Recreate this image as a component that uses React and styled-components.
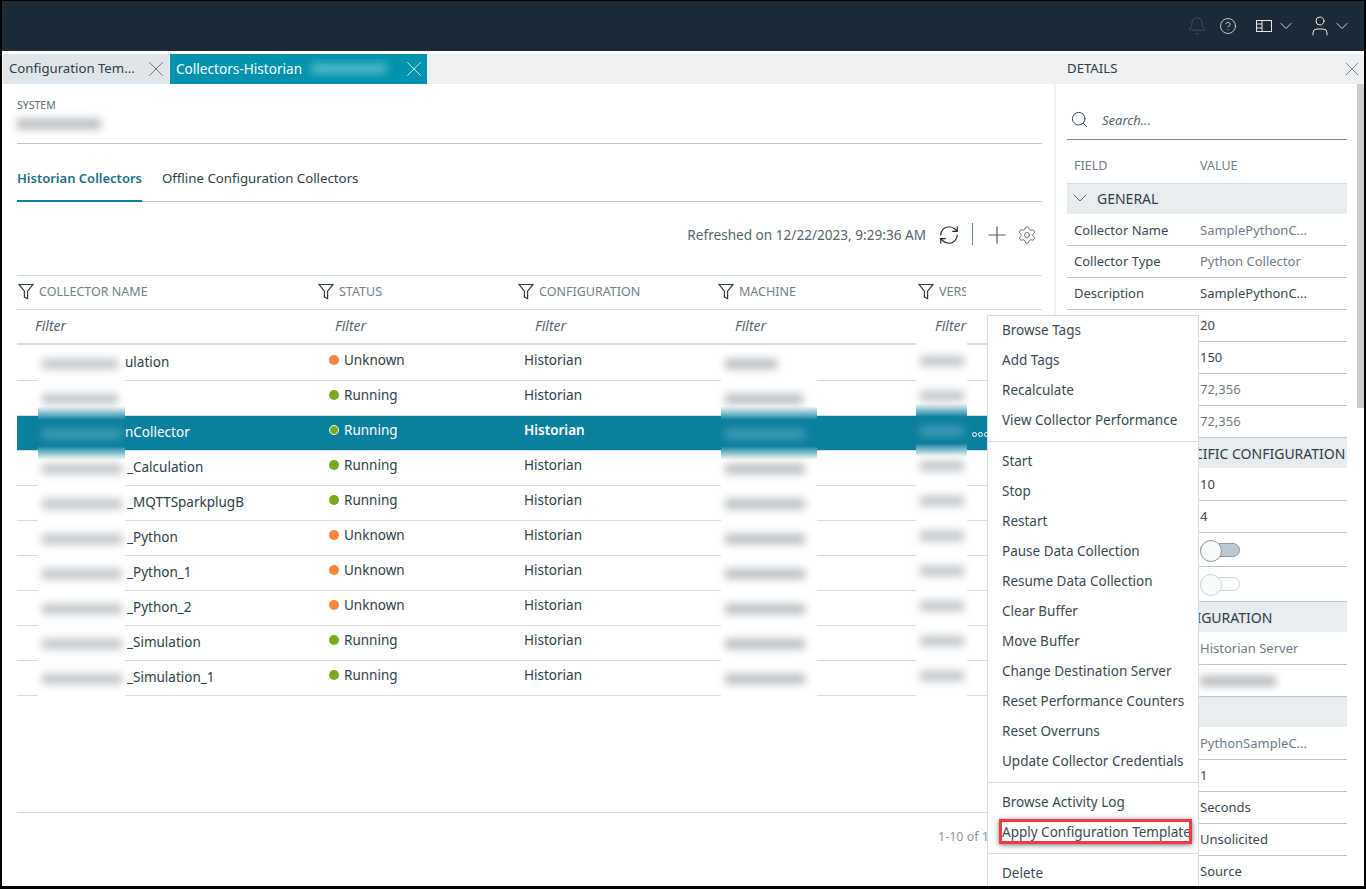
import React from "react";
import styled, { createGlobalStyle } from "styled-components";
import { Bell, ChevronDown, CircleHelp, Plus, RefreshCw, Search, Settings, User, X } from "lucide-react";

const TEAL = "#0b7f9e";

const collectors = [
  { name: "ulation", indent: 108, status: "Unknown", smudge: 76, machine: 52, version: 44 },
  { name: "", indent: 108, status: "Running", smudge: 76, machine: 78, version: 44 },
  { name: "nCollector", indent: 108, status: "Running", selected: true, smudge: 80, machine: 80, version: 44 },
  { name: "_Calculation", indent: 110, status: "Running", smudge: 80, machine: 80, version: 44 },
  { name: "_MQTTSparkplugB", indent: 110, status: "Running", smudge: 80, machine: 80, version: 44 },
  { name: "_Python", indent: 110, status: "Unknown", smudge: 80, machine: 80, version: 44 },
  { name: "_Python_1", indent: 110, status: "Unknown", smudge: 80, machine: 80, version: 44 },
  { name: "_Python_2", indent: 110, status: "Unknown", smudge: 80, machine: 80, version: 44 },
  { name: "_Simulation", indent: 110, status: "Running", smudge: 80, machine: 80, version: 44 },
  { name: "_Simulation_1", indent: 110, status: "Running", smudge: 80, machine: 80, version: 44 },
];

const columns = ["Collector Name", "Status", "Configuration", "Machine", "Version"];

const menuGroups = [
  ["Browse Tags", "Add Tags", "Recalculate", "View Collector Performance"],
  [
    "Start",
    "Stop",
    "Restart",
    "Pause Data Collection",
    "Resume Data Collection",
    "Clear Buffer",
    "Move Buffer",
    "Change Destination Server",
    "Reset Performance Counters",
    "Reset Overruns",
    "Update Collector Credentials",
  ],
  ["Browse Activity Log", "Apply Configuration Template"],
  ["Delete"],
];

// field list of the details panel, hidden labels sit behind the menu
const details = [
  { section: "General", indent: 0 },
  { field: "Collector Name", value: "SamplePythonC...", muted: true, h: 32 },
  { field: "Collector Type", value: "Python Collector", muted: true },
  { field: "Description", value: "SamplePythonC..." },
  { value: "20" },
  { value: "150" },
  { value: "72,356", muted: true },
  { value: "72,356", muted: true },
  { section: "Specific Configuration", indent: 103, bare: true },
  { value: "10", h: 33 },
  { value: "4" },
  { toggle: true, on: true, h: 34 },
  { toggle: true, h: 35 },
  { section: "Configuration", indent: 92, bare: true, h: 30 },
  { value: "Historian Server", muted: true, h: 33 },
  { smudge: true, h: 32 },
  { section: "", bare: true },
  { value: "PythonSampleC...", muted: true, h: 33 },
  { value: "1" },
  { value: "Seconds" },
  { value: "Unsolicited" },
  { value: "Source" },
];

const GlobalStyle = createGlobalStyle`
  html, body {
    margin: 0;
    padding: 0;
    background: #000;
  }
  body {
    font-family: "Noto Sans", "Open Sans", Arial, sans-serif;
    font-size: 13.5px;
    color: #2f3e4a;
  }
  * {
    box-sizing: border-box;
  }
`;

const Frame = styled.div`
  width: 1366px;
  height: 889px;
  border-style: solid;
  border-color: #000;
  border-width: 1px 2px 3px 2px;
  background: #fff;
  overflow: hidden;
  display: flex;
  flex-direction: column;
`;

const TopBar = styled.header`
  flex: 0 0 50px;
  background: #1c2a35;
  display: flex;
  align-items: center;
  justify-content: flex-end;
  padding-right: 12px;
  color: #e4e8eb;
`;

const IconSlot = styled.span`
  display: inline-flex;
  align-items: center;
  margin-left: ${({ $gap }) => $gap || 0}px;
  color: ${({ $dim }) => ($dim ? "#46545f" : "inherit")};
`;

const Body = styled.div`
  flex: 1;
  min-height: 0;
  display: flex;
  position: relative;
  padding-top: 3px;
`;

const Main = styled.main`
  flex: 0 0 1052px;
  display: flex;
  flex-direction: column;
  min-width: 0;
`;

const TabBar = styled.div`
  flex: 0 0 30px;
  display: flex;
  background: #eef0f2;
  padding-left: 1px;
`;

const Tab = styled.div`
  width: ${({ $width }) => $width}px;
  margin-right: 1px;
  display: flex;
  align-items: center;
  padding-left: 6px;
  font-size: ${({ $active }) => ($active ? 13.6 : 13.2)}px;
  background: ${({ $active }) => ($active ? "#0093ad" : "#dfe5e8")};
  color: ${({ $active }) => ($active ? "#fff" : "#2f3e4a")};
`;

const TabLabel = styled.span`
  flex: 1;
  white-space: nowrap;
  overflow: hidden;
  display: flex;
  align-items: center;
  padding-bottom: 2px;
`;

const TabClose = styled(X)`
  flex: none;
`;

const TabSmudge = styled.span`
  display: block;
  width: 76px;
  height: 11px;
  margin-left: 9px;
  background: #4fb7c8;
  filter: blur(4px);
`;

const Content = styled.div`
  flex: 1;
  display: flex;
  flex-direction: column;
  padding: 0 12px 0 15px;
  min-height: 0;
`;

const SystemBlock = styled.div`
  height: 60px;
  padding-top: 14px;
  border-bottom: 1px solid #bcc5cc;
`;

const SystemLabel = styled.div`
  font-size: 10.5px;
  line-height: 14px;
  color: #5c6a75;
`;

const Smudge = styled.span`
  display: block;
  width: ${({ $width }) => $width}px;
  height: 10px;
  background: ${({ $color }) => $color || "#b4b7ba"};
  filter: blur(4px);
`;

const SystemValue = styled.div`
  padding-top: 7px;
`;

const SubTabs = styled.div`
  height: 58px;
  display: flex;
  align-items: flex-end;
  gap: 20px;
  border-bottom: 1px solid #bcc5cc;
`;

const SubTab = styled.div`
  height: 44px;
  line-height: 40px;
  font-size: ${({ $active }) => ($active ? 13 : 13.25)}px;
  margin-bottom: -1px;
  font-weight: ${({ $active }) => ($active ? 600 : 400)};
  color: ${({ $active }) => ($active ? "#1d6f8b" : "#2f3e4a")};
  border-bottom: ${({ $active }) => ($active ? `2px solid ${TEAL}` : "none")};
`;

const Toolbar = styled.div`
  height: 73px;
  display: flex;
  align-items: flex-start;
  justify-content: flex-end;
  padding: 21px 5px 0 0;
  color: #1f2a33;
`;

const Refreshed = styled.span`
  font-size: 13.6px;
  line-height: 24px;
  color: #56646f;
  margin-right: 12px;
`;

const ToolDivider = styled.span`
  width: 1px;
  height: 22px;
  background: #6f7f8b;
  margin: 0 10px 0 12px;
`;

const ToolIcon = styled.span`
  display: inline-flex;
  align-items: center;
  height: 24px;
  color: ${({ $color }) => $color || "inherit"};
  margin-left: ${({ $gap }) => $gap || 0}px;
`;

const HeaderRow = styled.div`
  display: grid;
  grid-template-columns: 300px 200px 200px 200px 1fr;
  height: 35px;
  border-top: 1px solid #d8dde1;
  border-bottom: 1px solid #d8dde1;
`;

const HeadCell = styled.div`
  display: flex;
  align-items: center;
  gap: 5px;
  padding: 0 0 2px 1px;
  font-size: 12.5px;
  text-transform: uppercase;
  color: #71808c;
  white-space: nowrap;
  overflow: hidden;
  max-width: ${({ $clip }) => ($clip ? "49px" : "none")};
  svg {
    flex: none;
  }
`;

const FilterRow = styled.div`
  display: grid;
  grid-template-columns: 300px 200px 200px 200px 1fr;
  height: 35px;
  border-bottom: 2px solid #d8dde1;
`;

const FilterCell = styled.div`
  padding-left: 18px;
  line-height: 32px;
  font-style: italic;
  font-size: 14px;
  color: #56646f;
`;

const Rows = styled.div`
  position: relative;
  margin-top: 1px;
`;

const Row = styled.div`
  display: grid;
  grid-template-columns: 300px 200px 200px 200px 1fr;
  height: 35px;
  border-bottom: 1px solid #d8dde1;
  background: ${({ $selected }) => ($selected ? TEAL : "transparent")};
  color: ${({ $selected }) => ($selected ? "#fff" : "#2f3e4a")};
`;

const NameCell = styled.div`
  padding-left: ${({ $indent }) => $indent}px;
  line-height: 32px;
  white-space: nowrap;
`;

const StatusCell = styled.div`
  display: flex;
  align-items: center;
  gap: 5px;
  padding: 0 0 7px 12px;
`;

const Dot = styled.span`
  width: 10px;
  height: 10px;
  border-radius: 50%;
  background: ${({ $kind }) => ($kind === "Unknown" ? "#f9873a" : "#7aa81e")};
  border: ${({ $selected }) => ($selected ? "1px solid #fff" : "none")};
`;

const ConfigCell = styled.div`
  padding-left: 7px;
  line-height: 28px;
  font-weight: ${({ $selected }) => ($selected ? 600 : 400)};
`;

const RowDots = styled.div`
  display: flex;
  justify-content: flex-end;
  align-items: center;
  gap: 1px;
  padding: 2px 0 0 0;
  margin-right: 53px;
  grid-column: 5;
  span {
    width: 5px;
    height: 5px;
    border: 1px solid #fff;
    border-radius: 50%;
  }
`;

// white patches that hide names and machines in the picture
const Redaction = styled.div`
  position: absolute;
  top: ${({ $top }) => $top}px;
  left: ${({ $left }) => $left}px;
  width: ${({ $width }) => $width}px;
  bottom: 0;
  background: linear-gradient(
    #fff 60px,
    ${TEAL} 74px,
    ${TEAL} 100px,
    #fff 114px
  );
`;

const RedactionSlot = styled.div`
  height: 35px;
  display: flex;
  align-items: center;
  padding-left: 4px;
`;

const Footer = styled.div`
  position: absolute;
  left: 15px;
  top: 761px;
  width: 1023px;
  height: 48px;
  border-top: 1px solid #d8dde1;
  font-size: 12.5px;
  line-height: 47px;
  color: #8b969f;
  padding-left: 921px;
  white-space: nowrap;
  overflow: hidden;
`;

const Details = styled.aside`
  flex: 0 0 310px;
  display: flex;
  flex-direction: column;
  border-left: 2px solid #eef0f2;
  min-height: 0;
`;

const DetailsHead = styled.div`
  flex: 0 0 30px;
  margin-left: -1px;
  background: #eef0f2;
  display: flex;
  align-items: center;
  justify-content: space-between;
  padding-left: 12px;
  font-size: 13.2px;
  color: #2f3e4a;
`;

const DetailsTitle = styled.span`
  padding-bottom: 2px;
`;

const DetailsBody = styled.div`
  flex: 1;
  display: flex;
  min-height: 0;
  overflow: hidden;
`;

const DetailsList = styled.div`
  flex: 1;
  padding: 0 10px 0 11px;
  min-width: 0;
`;

const ScrollTrack = styled.div`
  flex: 0 0 7px;
`;

const ScrollThumb = styled.div`
  height: 324px;
  background: #cdcdcd;
`;

const SearchBox = styled.div`
  height: 56px;
  padding: 16px 0 0 3px;
  display: flex;
  align-items: center;
  gap: 13px;
  border-bottom: 1px solid #7d8a94;
  font-style: italic;
  font-size: 13px;
  color: #56646f;
`;

const FieldHead = styled.div`
  height: 44px;
  display: grid;
  grid-template-columns: 126px 1fr;
  align-items: center;
  padding: 8px 0 0 7px;
  font-size: 12.5px;
  color: #71808c;
  border-bottom: 1px solid #d8dde1;
`;

const SectionRow = styled.div`
  height: ${({ $h }) => $h || 30}px;
  background: #e9ecef;
  display: flex;
  align-items: center;
  gap: 5px;
  padding-left: ${({ $bare, $indent }) => ($bare ? $indent : 1)}px;
  padding-bottom: ${({ $bare }) => ($bare ? 0 : 2)}px;
  font-size: 14px;
  text-transform: uppercase;
  white-space: nowrap;
  overflow: hidden;
  color: #2f3e4a;
`;

const FieldRow = styled.div`
  height: ${({ $h }) => $h || 32}px;
  display: grid;
  grid-template-columns: 126px 1fr;
  align-items: center;
  padding-left: 7px;
  padding-bottom: ${({ $h }) => ($h ? 0 : 2)}px;
  border-bottom: 1px solid #b9c5cf;
  font-size: 13px;
`;

const FieldName = styled.span`
  color: #3b4954;
`;

const FieldValue = styled.span`
  color: ${({ $muted }) => ($muted ? "#6f7d88" : "#3b4954")};
`;

const Toggle = styled.span`
  position: relative;
  display: block;
  width: 40px;
  height: 14px;
  border-radius: 7px;
  background: ${({ $on }) => ($on ? "#bcc8d0" : "#fff")};
  border: 1px solid ${({ $on }) => ($on ? "#8d9ba6" : "#ccd3d9")};
  &::before {
    content: "";
    position: absolute;
    left: -1px;
    top: -4px;
    width: 20px;
    height: 20px;
    border-radius: 50%;
    background: #f9fafb;
    border: 1px solid ${({ $on }) => ($on ? "#8d9ba6" : "#ccd3d9")};
  }
`;

const Menu = styled.nav`
  position: absolute;
  left: 985px;
  top: 264px;
  width: 212px;
  height: 640px;
  background: #fff;
  border: 1px solid #d5dbe0;
  font-size: 13.5px;
  color: #3b4954;
`;

const MenuGroup = styled.div`
  padding: ${({ $first }) => ($first ? "0 0 5px" : "5px 0 5px")};
  border-bottom: 1px solid #d8dde1;
  &:last-child {
    border-bottom: none;
  }
`;

const MenuItem = styled.div`
  height: 30px;
  line-height: 28px;
  padding-left: 14px;
  white-space: nowrap;
`;

// call-out box that lies over the menu item in the picture
const CallOut = styled.span`
  position: absolute;
  left: 11px;
  top: 503px;
  width: 193px;
  height: 25px;
  border: 3px solid #ef3b45;
  box-shadow: 0 1px 5px rgba(0, 0, 0, 0.55);
`;

const FunnelIcon = () => (
  <svg width="16" height="17" viewBox="0 0 16 17" fill="none" stroke="#2f3e4a" strokeWidth="1.2">
    <path d="M1 1.5h14L9.6 8.2v7.3l-3.2-1.4V8.2z" />
  </svg>
);

const PanelIcon = () => (
  <svg width="16" height="12" viewBox="0 0 16 12" fill="none" stroke="currentColor" strokeWidth="1">
    <rect x="0.5" y="0.5" width="15" height="11" />
    <path d="M6 .5v11M.5 4h5.5M.5 8h5.5" />
  </svg>
);

const GeneralChevron = styled(ChevronDown)`
  color: #4a5863;
`;

export default function App() {
  return (
    <Frame>
      <GlobalStyle />
      <TopBar>
        <IconSlot $dim>
          <Bell size={20} strokeWidth={1} />
        </IconSlot>
        <IconSlot $gap={12}>
          <CircleHelp size={18} strokeWidth={1.1} />
        </IconSlot>
        <IconSlot $gap={19}>
          <PanelIcon />
        </IconSlot>
        <IconSlot $gap={4}>
          <ChevronDown size={20} strokeWidth={1.1} />
        </IconSlot>
        <IconSlot $gap={12}>
          <User size={24} strokeWidth={1} />
        </IconSlot>
        <IconSlot>
          <ChevronDown size={20} strokeWidth={1.1} />
        </IconSlot>
      </TopBar>
      <Body>
        <Main>
          <TabBar>
            <Tab $width={166}>
              <TabLabel>Configuration Tem...</TabLabel>
              <TabClose size={26} strokeWidth={0.7} color="#4a5863" />
            </Tab>
            <Tab $width={257} $active>
              <TabLabel>
                Collectors-Historian
                <TabSmudge />
              </TabLabel>
              <TabClose size={26} strokeWidth={0.7} color="#fff" />
            </Tab>
          </TabBar>
          <Content>
            <SystemBlock>
              <SystemLabel>SYSTEM</SystemLabel>
              <SystemValue>
                <Smudge $width={84} />
              </SystemValue>
            </SystemBlock>
            <SubTabs>
              <SubTab $active>Historian Collectors</SubTab>
              <SubTab>Offline Configuration Collectors</SubTab>
            </SubTabs>
            <Toolbar>
              <Refreshed>Refreshed on 12/22/2023, 9:29:36 AM</Refreshed>
              <ToolIcon>
                <RefreshCw size={22} strokeWidth={1.3} />
              </ToolIcon>
              <ToolDivider />
              <ToolIcon $color="#4a5863">
                <Plus size={28} strokeWidth={1} />
              </ToolIcon>
              <ToolIcon $gap={6} $color="#4a5863">
                <Settings size={20} strokeWidth={1} />
              </ToolIcon>
            </Toolbar>
            <HeaderRow>
              {columns.map((c, i) => (
                <HeadCell key={c} $clip={i === 4}>
                  <FunnelIcon />
                  {c}
                </HeadCell>
              ))}
            </HeaderRow>
            <FilterRow>
              {columns.map((c) => (
                <FilterCell key={c}>Filter</FilterCell>
              ))}
            </FilterRow>
            <Rows>
              {collectors.map((row, i) => (
                <Row key={i} $selected={row.selected}>
                  <NameCell $indent={row.indent}>{row.name}</NameCell>
                  <StatusCell>
                    <Dot $kind={row.status} $selected={row.selected} />
                    {row.status}
                  </StatusCell>
                  <ConfigCell $selected={row.selected}>Historian</ConfigCell>
                  {row.selected && (
                    <RowDots>
                      <span />
                      <span />
                      <span />
                    </RowDots>
                  )}
                </Row>
              ))}
              <Redaction $top={0} $left={21} $width={87}>
                {collectors.map((row, i) => (
                  <RedactionSlot key={i}>
                    <Smudge $width={row.smudge} $color={row.selected ? "#3f9db6" : "#c0c3c6"} />
                  </RedactionSlot>
                ))}
              </Redaction>
              <Redaction $top={0} $left={704} $width={96}>
                {collectors.map((row, i) => (
                  <RedactionSlot key={i}>
                    <Smudge $width={row.machine} $color={row.selected ? "#3f9db6" : "#b8bbbe"} />
                  </RedactionSlot>
                ))}
              </Redaction>
              <Redaction $top={-3} $left={899} $width={51}>
                {collectors.map((row, i) => (
                  <RedactionSlot key={i}>
                    <Smudge $width={row.version} $color={row.selected ? "#3f9db6" : "#c0c3c6"} />
                  </RedactionSlot>
                ))}
              </Redaction>
            </Rows>
          </Content>
        </Main>
        <Details>
          <DetailsHead>
            <DetailsTitle>DETAILS</DetailsTitle>
            <X size={24} strokeWidth={0.7} color="#4a5863" />
          </DetailsHead>
          <DetailsBody>
            <DetailsList>
              <SearchBox>
                <Search size={19} strokeWidth={1.2} color="#2f3e4a" />
                Search...
              </SearchBox>
              <FieldHead>
                <span>FIELD</span>
                <span>VALUE</span>
              </FieldHead>
              {details.map((d, i) => {
                if (d.section !== undefined) {
                  return (
                    <SectionRow key={i} $bare={d.bare} $indent={d.indent} $h={d.h}>
                      {!d.bare && <GeneralChevron size={24} strokeWidth={0.9} />}
                      {d.section}
                    </SectionRow>
                  );
                }
                return (
                  <FieldRow key={i} $h={d.h}>
                    <FieldName>{d.field}</FieldName>
                    {d.toggle && <Toggle $on={d.on} />}
                    {d.smudge && <Smudge $width={76} />}
                    {d.value && <FieldValue $muted={d.muted}>{d.value}</FieldValue>}
                  </FieldRow>
                );
              })}
            </DetailsList>
            <ScrollTrack>
              <ScrollThumb />
            </ScrollTrack>
          </DetailsBody>
        </Details>
        <Footer>1-10 of 10</Footer>
        <Menu>
          {menuGroups.map((group, i) => (
            <MenuGroup key={i} $first={i === 0}>
              {group.map((item) => (
                <MenuItem key={item}>{item}</MenuItem>
              ))}
            </MenuGroup>
          ))}
          <CallOut />
        </Menu>
      </Body>
    </Frame>
  );
}
